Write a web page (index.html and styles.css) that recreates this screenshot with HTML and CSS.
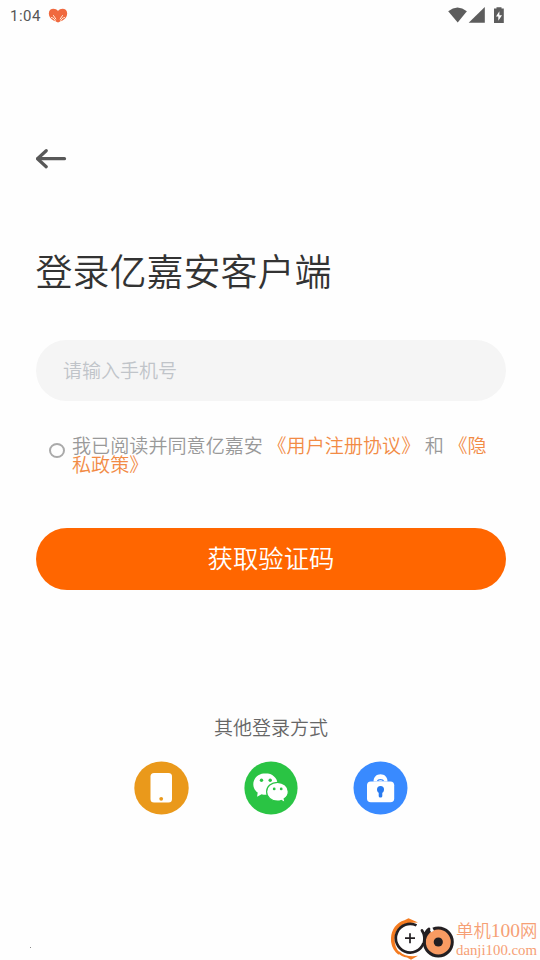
FILE: index.html
```html
<!DOCTYPE html>
<html lang="zh-CN">
<head>
<meta charset="utf-8">
<title>登录</title>
<link rel="stylesheet" href="styles.css">
</head>
<body>
<div class="screen">
  <header class="status">
    <span class="time">1:04</span>
    <svg class="heart" width="20" height="16" viewBox="0 0 20 16">
      <path fill="#f0693f" d="M10 3C7.500-.3 1-.2.800 5.400.800 8.700 3 10.800 5.500 12.500L10 14.500l4.500-2c2.500-1.700 4.700-3.800 4.700-7.100C19-.2 12.500-.3 10 3z"/>
      <path fill="none" stroke="#ffe9d8" stroke-width="1" stroke-linecap="round" d="M3.500 9.500c2 .5 3.500 1.500 4 4M5.500 7.500l2.300 3.500M16.500 9.500c-2 .5-3.500 1.500-4 4M14.500 7.500L12.200 11"/>
    </svg>
    <svg class="signals" width="58" height="18" viewBox="0 0 58 18">
      <path fill="#5d5d5d" d="M.2 4.200Q9.500-3.200 18.900 4.200L9.700 15.500z"/>
      <path fill="#5d5d5d" d="M36.800.1V15.800H20.700z"/>
      <path fill="#5d5d5d" d="M48.500.2h5v1.400h2.300V16H46V1.600h2.500z"/>
      <path fill="#fff" d="M51.400 4.200L48 9.600h2.300v4.200L54 8.200h-2.600z"/>
    </svg>
  </header>
  <main class="login">
    <svg class="back" width="31" height="22" viewBox="0 0 31 22">
      <path fill="none" stroke="#585858" stroke-width="3.200" stroke-linecap="round" stroke-linejoin="round" d="M10.200 2.700L1.500 10.700l8.700 8"/>
      <path stroke="#585858" stroke-width="3.200" stroke-linecap="round" d="M2 10.700h26.500"/>
    </svg>
    <h1 class="title">登录亿嘉安客户端</h1>
    <div class="field">请输入手机号</div>
    <div class="consent">
      <span class="radio"></span>
      <p class="terms">我已阅读并同意亿嘉安 <a>《用户注册协议》</a> 和 <a>《隐<br>私政策》</a></p>
    </div>
    <button class="submit">获取验证码</button>
    <p class="other">其他登录方式</p>
    <div class="methods">
      <svg width="55" height="54" viewBox="0 0 55 54">
        <ellipse cx="27.500" cy="27" rx="27.200" ry="26.600" fill="#ea991b"/>
        <rect x="16.500" y="12" width="21.500" height="29.500" rx="3.500" fill="#fff"/>
        <circle cx="27.200" cy="37.800" r="1.900" fill="#ea991b"/>
      </svg>
      <svg width="55" height="54" viewBox="0 0 55 54">
        <ellipse cx="27" cy="27" rx="26.600" ry="26.600" fill="#2ac444"/>
        <path fill="#fff" d="M21.500 12.300c-6.800 0-12.200 4.800-12.200 10.900 0 3.500 1.700 6.400 4.400 8.300l-.6 4.200 4.500-2.500c1.300.4 2.500.5 3.900.5 6.700 0 12.100-4.700 12.100-10.500 0-6.100-5.400-10.900-12.100-10.900z"/>
        <path fill="#fff" stroke="#2ac444" stroke-width="1.200" d="M33.500 21.400c-6.200 0-10.900 4-10.900 9.300s4.700 9.400 10.900 9.400c1.400 0 2.500-.2 3.700-.6l4 2.300-1-4c2.600-1.700 4.100-4.100 4.100-7.100 0-5.300-4.700-9.300-10.800-9.300z"/>
        <g fill="#2ac444"><circle cx="17.500" cy="19.200" r="1.700"/><circle cx="26.200" cy="19.200" r="1.700"/><circle cx="30.200" cy="27.900" r="1.400"/><circle cx="37.200" cy="27.900" r="1.400"/></g>
      </svg>
      <svg width="55" height="54" viewBox="0 0 55 54">
        <ellipse cx="27.500" cy="27" rx="27" ry="26.600" fill="#398aff"/>
        <path fill="#fff" d="M20.500 20.500c0-4.500 3-7.300 7-7.300s7 2.800 7 7.300z"/>
        <path fill="none" stroke="#398aff" stroke-width="1.300" d="M24.600 20.200c.4-2.200 5.400-2.200 5.800 0"/>
        <rect x="14" y="20.500" width="27.200" height="20.700" rx="3.800" fill="#fff"/>
        <circle cx="27.500" cy="28.500" r="3.500" fill="#287af0"/>
        <rect x="25.700" y="29" width="3.600" height="7.600" rx="1.600" fill="#287af0"/>
      </svg>
    </div>
  </main>
  <footer class="footer">
    <span class="dot"></span>
    <div class="brand">
      <svg width="65" height="42" viewBox="0 0 65 42">
        <path fill="#f47b20" d="M27 4.500L17.500.3 13.500 2.200C4 5-1 14 .1 24c.8 5.500 3.400 9.800 7.400 12.800l1.400-2.300C5 31 3.400 26 3.600 20.500 4 12 9.500 6.300 17.500 5zM6.500 34.500c2.500 3.100 6 4.800 9.500 5.100l4 2.200 7-4c-7 1.200-14 .2-18.500-4.300z"/>
        <circle cx="19" cy="20.200" r="13" fill="#fff"/>
        <path fill="none" stroke="#231f22" stroke-width="2.700" d="M25.500 7.400A14.300 14.300 0 1 0 32.600 25"/>
        <path stroke="#231f22" stroke-width="1.700" d="M14 20.200h10M19 15.200v10"/>
        <circle cx="47.300" cy="24" r="14" fill="#f99b62" stroke="#231f22" stroke-width="3"/>
        <path stroke="#fefefe" stroke-width="3.200" d="M41.500 13.500L38.500 7.500"/>
        <path fill="none" stroke="#231f22" stroke-width="2.800" stroke-linecap="round" d="M31 12.500c2 3 3 7 2.300 11.500M34 17.500c.5-3 1.800-5 4-6.500"/>
        <circle cx="47.300" cy="24" r="4.600" fill="#231f22"/>
      </svg>
      <div class="brand-text">
        <span class="brand-name">单机<span class="brand-num">100</span>网</span>
        <span class="brand-url">danji100.com</span>
      </div>
    </div>
  </footer>
</div>
</body>
</html>
```
FILE: styles.css
```css
* { box-sizing: border-box; }
body {
  margin: 0;
  background: #fefefe;
  font-family: "Noto Sans CJK SC", sans-serif;
  font-weight: 350;
}
.screen {
  width: 540px;
  height: 960px;
  display: flex;
  flex-direction: column;
  overflow: hidden;
}
.status {
  height: 32px;
  padding: 0 34px 0 10px;
  display: flex;
  align-items: center;
}
.time {
  font: 400 15px/32px Roboto, sans-serif;
  letter-spacing: .5px;
  color: #555;
}
.heart { margin-left: 7px; }
.signals { margin-left: auto; margin-top: -1px; }
.login {
  flex: 1;
  padding: 116px 34px 0 36px;
  display: flex;
  flex-direction: column;
}
.back { display: block; }
.title {
  margin: 73px 0 0 -.5px;
  font-size: 37px;
  line-height: 54px;
  font-weight: 350;
  color: #333;
}
.field {
  height: 61px;
  margin-top: 43px;
  padding-left: 27px;
  border-radius: 31px;
  background: #f5f5f5;
  font-size: 19px;
  line-height: 59px;
  color: #c0c4c9;
}
.consent {
  display: flex;
  margin-top: 35px;
  padding-left: 13px;
}
.radio {
  width: 16px;
  height: 15px;
  margin: 7px 7px 0 0;
  border: 2px solid #aaa;
  border-radius: 50%;
}
.terms {
  margin: 0;
  font-size: 19.1px;
  line-height: 19px;
  word-spacing: .3px;
  color: #999;
  white-space: nowrap;
}
.terms a { color: #f28b45; }
.submit {
  height: 62px;
  margin: 54px 0 0;
  padding: 0 0 4px;
  border: 0;
  border-radius: 31px;
  background: #f60;
  font: 350 25.400px/58px "Noto Sans CJK SC", sans-serif;
  color: #fff;
}
.other {
  margin: 123px 0 0;
  font-size: 19px;
  line-height: 28px;
  text-align: center;
  color: #666;
}
.methods {
  display: flex;
  justify-content: space-between;
  width: 274px;
  margin: 19.500px 0 0 98px;
}
.footer {
  height: 42px;
  display: flex;
  justify-content: space-between;
  padding: 0 2px 0 30px;
}
.dot { width: 1px; height: 1px; margin-top: 29px; background: #888; }
.brand { display: flex; }
.brand-text {
  width: 82px;
  display: flex;
  flex-direction: column;
  font-family: "Liberation Serif", "Noto Sans CJK SC", serif;
  color: #f6a075;
  white-space: nowrap;
}
.brand-name { font-size: 17.400px; line-height: 25px; }
.brand-num { font-size: 19.500px; }
.brand-url { font-size: 14.800px; line-height: 12px; }
```
